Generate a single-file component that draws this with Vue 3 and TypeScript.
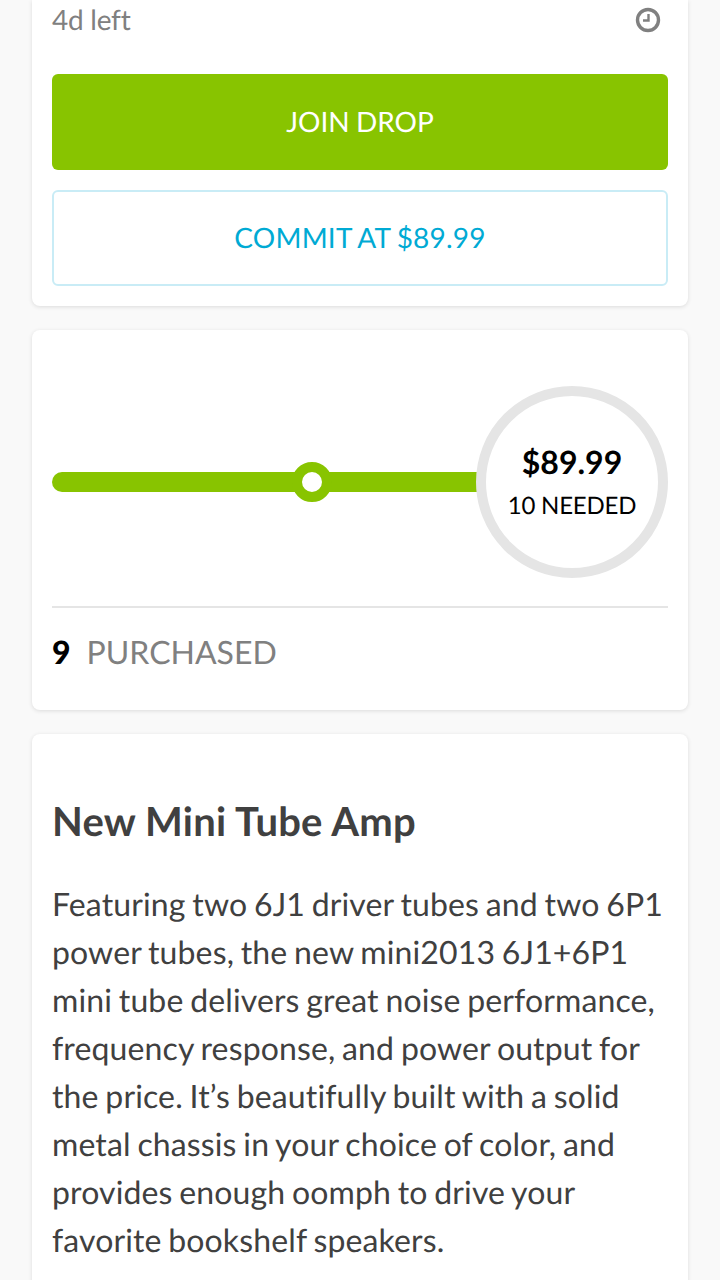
<script setup lang="ts">
const description = "Featuring two 6J1 driver tubes and two 6P1 power tubes, the new mini2013 6J1+6P1 mini tube delivers great noise performance, frequency response, and power output for the price. It’s beautifully built with a solid metal chassis in your choice of color, and provides enough oomph to drive your favorite bookshelf speakers."
</script>

<template>
  <div class="page">
    <section class="card top">
      <div class="time">
        <span>4d left</span>
        <svg class="clock" width="26" height="26" viewBox="0 0 26 26" fill="none" stroke="#808080">
          <circle cx="13" cy="13" r="10.5" stroke-width="3.4" />
          <path d="M13.5 7v6.5H8" stroke-width="2.4" />
        </svg>
      </div>
      <button class="btn join">JOIN DROP</button>
      <button class="btn commit">COMMIT AT $89.99</button>
    </section>
    <section class="card progress">
      <div class="track-row">
        <div class="track">
          <span class="knob"></span>
        </div>
        <div class="ring">
          <strong>$89.99</strong>
          <span>10 NEEDED</span>
        </div>
      </div>
      <div class="purchased"><b>9</b><span>PURCHASED</span></div>
    </section>
    <section class="card info">
      <h2>New Mini Tube Amp</h2>
      <p>{{ description }}</p>
    </section>
  </div>
</template>

<style>
html, body { margin: 0; background: #f9f9f9; }
body { height: 1280px; overflow: hidden; }
</style>

<style scoped>
.page {
  height: 1280px;
  overflow: hidden;
  padding: 0 32px;
  box-sizing: border-box;
  font-family: Lato, "Liberation Sans", sans-serif;
  text-rendering: geometricPrecision;
  font-variant-ligatures: none;
  display: flex;
  flex-direction: column;
  gap: 24px;
}
.card {
  background: #fff;
  border-radius: 8px;
  box-shadow: 0 1px 4px rgba(0, 0, 0, 0.12);
  padding: 0 20px;
  flex: none;
}
.top { height: 306px; border-radius: 0 0 8px 8px; box-sizing: border-box; }
.time {
  height: 40px;
  display: flex;
  justify-content: space-between;
  align-items: center;
  font-size: 28px;
  line-height: 38px;
  letter-spacing: -0.25px;
  color: #808080;
}
.time span { margin-top: -2px; }
.clock { margin-right: 7px; }
.btn {
  display: block;
  width: 100%;
  height: 96px;
  border-radius: 6px;
  font: 400 28px Lato, "Liberation Sans", sans-serif;
  text-rendering: geometricPrecision;
  word-spacing: -1px;
  padding: 0 0 3px;
}
.join { margin-top: 34px; background: #88c400; border: 0; color: #fff; }
.commit { margin-top: 20px; background: #fff; border: 2px solid #c9ecf6; color: #00aad4; letter-spacing: 0.2px; }
.progress { height: 380px; box-sizing: border-box; padding-top: 56px; }
.track-row { display: flex; align-items: center; height: 192px; position: relative; }
.track { flex: 1; height: 20px; background: #88c400; border-radius: 10px 0 0 10px; position: relative; }
.knob {
  position: absolute;
  left: 240px;
  top: -10px;
  width: 20px;
  height: 20px;
  border: 10px solid #88c400;
  border-radius: 50%;
  background: #fff;
}
.ring {
  width: 192px;
  height: 192px;
  box-sizing: border-box;
  border: 10px solid #e5e5e5;
  border-radius: 50%;
  display: flex;
  flex-direction: column;
  align-items: center;
  justify-content: center;
  background: #fff;
  margin-left: -4px;
  position: relative;
  color: #000;
}
.ring strong { font-size: 32px; line-height: 40px; font-weight: 700; }
.ring span { font-size: 24px; line-height: 36px; margin-top: 6px; margin-bottom: -2px; letter-spacing: -0.2px; }
.purchased {
  margin-top: 28px;
  border-top: 2px solid #e5e5e5;
  height: 88px;
  display: flex;
  align-items: center;
  gap: 16px;
  font-size: 32px;
  line-height: 40px;
  color: #808080;
}
.purchased span { margin-top: -1px; }
.purchased b { color: #000; font-weight: 900; font-size: 32px; margin-top: -1px; }
.info { padding-top: 62px; padding-bottom: 40px; }
h2 { margin: 0; font-size: 40px; line-height: 50px; font-weight: 700; color: #404040; letter-spacing: 0.2px; }
p { margin: 34px 0 0; font-size: 32px; line-height: 48px; color: #404040; word-spacing: -1.6px; letter-spacing: 0.13px; }
</style>
